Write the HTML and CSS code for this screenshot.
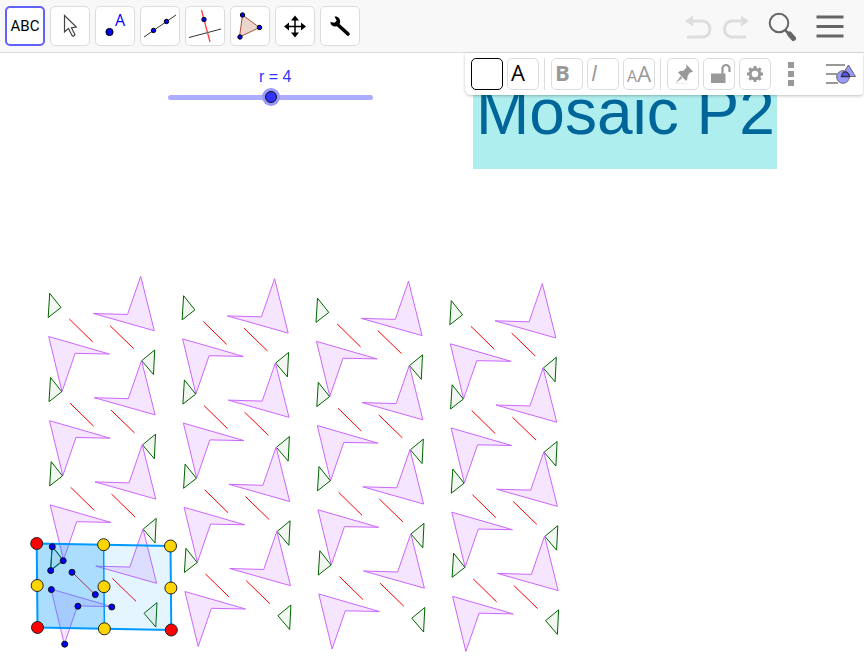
FILE: index.html
```html
<!DOCTYPE html>
<html lang="en">
<head>
<meta charset="utf-8">
<title>Mosaic P2</title>
<link rel="stylesheet" href="styles.css">
</head>
<body>
<div class="app">
  <header class="header">
    <nav class="tools" aria-label="Tools">
      <button class="tool tool-active" type="button">ABC</button>
      <button class="tool" type="button" aria-label="Move">
        <svg viewBox="0 0 38 38"><path d="M13.500 8.500V25l4-3.500 3.500 7q1.500 1.500 3-.8l-3.500-7 4.800-.6z" fill="#fff" stroke="#444" stroke-width="1.200"/></svg>
      </button>
      <button class="tool tool-point" type="button" aria-label="Point">
        <svg viewBox="0 0 38 38"><circle cx="13.500" cy="25" r="3.600" fill="#00f" stroke="#000"/><text x="19" y="19">A</text></svg>
      </button>
      <button class="tool" type="button" aria-label="Line">
        <svg viewBox="0 0 38 38"><path d="M3 30 35 8" stroke="#333"/><g fill="#00f" stroke="#000"><circle cx="12.500" cy="23.500" r="2.200"/><circle cx="25.500" cy="14.500" r="2.200"/></g></svg>
      </button>
      <button class="tool" type="button" aria-label="Perpendicular line">
        <svg viewBox="0 0 38 38"><path d="M3 30.500 35 22" stroke="#333"/><path d="m15.500 3 8.500 32" stroke="#f33" stroke-width="1.200"/><circle cx="18" cy="12.500" r="2.200" fill="#00f" stroke="#000"/></svg>
      </button>
      <button class="tool" type="button" aria-label="Polygon">
        <svg viewBox="0 0 38 38"><path d="m11.500 8 17 12.500L8.500 30z" fill="#ebd5cc" stroke="#a65340"/><g fill="#00f" stroke="#000"><circle cx="11.500" cy="8" r="2.200"/><circle cx="28.500" cy="20.500" r="2.200"/><circle cx="9" cy="30" r="2.200"/></g></svg>
      </button>
      <button class="tool" type="button" aria-label="Move graphics view">
        <svg viewBox="0 0 38 38"><path d="M19 12v15M11 19.500h16" stroke="#000" stroke-width="1.500"/><path d="m19 8.500 4 5h-8zm0 22 4-5h-8zM8 19.500l5-4v8zm22 0-5-4v8z"/></svg>
      </button>
      <button class="tool" type="button" aria-label="Custom tools">
        <svg viewBox="0 0 38 38"><path d="m16 17 11 10" stroke="#000" stroke-width="3.600" stroke-linecap="round"/><path d="M13.500 9.500c3-.7 6.500 2 5.500 6.500-.8 3.600-5.500 4.500-8 2.500-1-.8-1.600-2-1.500-3.500l4 .8 2.200-2z"/></svg>
      </button>
    </nav>
    <div class="actions">
      <button class="action" type="button" aria-label="Undo" disabled>
        <svg viewBox="0 0 32 32"><path d="M9 11h11.500a7.500 8 0 0 1 0 16H5" fill="none" stroke="#ddd" stroke-width="3"/><path d="m3 11 8-5.500v11z" fill="#ddd"/></svg>
      </button>
      <button class="action" type="button" aria-label="Redo" disabled>
        <svg viewBox="0 0 32 32"><path d="M25.500 11H14a7.500 8 0 0 0 0 16H28" fill="none" stroke="#ddd" stroke-width="3"/><path d="m31 11-8-5.500v11z" fill="#ddd"/></svg>
      </button>
      <button class="action action-search" type="button" aria-label="Search">
        <svg viewBox="0 0 32 32"><circle cx="13" cy="13" r="9.300" fill="none" stroke="#666" stroke-width="2"/><path d="m19 20 3 3" stroke="#666" stroke-width="2.500"/><path d="m23.500 24 4 4.500" stroke="#666" stroke-width="5" stroke-linecap="round"/></svg>
      </button>
      <button class="action action-menu" type="button" aria-label="Menu">
        <svg viewBox="0 0 32 32"><path d="M2.500 7h27M2.500 16.500h27M2.500 26h27" stroke="#666" stroke-width="3"/></svg>
      </button>
    </div>
  </header>

  <main class="canvas">
    <svg class="drawing" width="864" height="611" viewBox="0 53 864 611" role="img" aria-label="Mosaic pattern">
      <defs>
        <g id="motif">
          <path class="green" d="M49.700 293.300 61 307.500 48.200 317.500z"/>
          <path class="green" d="M154.700 350 141.700 360.700 153.500 374.500z"/>
          <path class="purple" d="M140.700 276.300 154.300 330.700 93.500 313.500 127.500 314.500z"/>
          <path class="purple" d="M48.700 336.500 109.300 354 75.200 353.300 62 391.500z"/>
          <path class="red" d="m69.300 319 23.500 23M110 325.700l23.700 23"/>
        </g>
        <g id="column">
          <use href="#motif"/>
          <use href="#motif" x="0.800" y="84.200"/>
          <use href="#motif" x="1.500" y="168.400"/>
          <use href="#motif" x="2.300" y="252.600"/>
        </g>
      </defs>
      <use href="#column"/>
      <use href="#column" x="133.900" y="2.400"/>
      <use href="#column" x="267.800" y="4.900"/>
      <use href="#column" x="401.600" y="7.300"/>
      <path d="M36.700 543.500 170.500 546 171.300 630 37.500 627.500z" fill="#09f" fill-opacity=".1"/>
      <path d="M36.700 543.500 103.600 544.700 104.400 628.800 37.500 627.500z" fill="#09f" fill-opacity=".25"/>
      <path d="M36.700 543.500 170.500 546 171.300 630 37.500 627.500z" fill="none" stroke="#09f" stroke-width="2"/>
      <path d="m103.600 544.700.8 84" stroke="#09f" stroke-width="1.500"/>
      <path d="M52.300 546.700 63.300 560.700 50.700 570.600z" fill="none" stroke="#006080"/>
      <g fill="#f00" stroke="#222" stroke-width="1">
        <circle cx="36.700" cy="543.500" r="6"/><circle cx="37.500" cy="627.500" r="6"/><circle cx="171.300" cy="630" r="6"/>
      </g>
      <g fill="#ffd500" stroke="#222" stroke-width="1">
        <circle cx="103.600" cy="544.700" r="6"/><circle cx="170.500" cy="546" r="6"/><circle cx="37.200" cy="585.500" r="6"/><circle cx="104" cy="586.700" r="6"/><circle cx="170.900" cy="588" r="6"/><circle cx="104.400" cy="628.800" r="6"/>
      </g>
      <g fill="#00f" stroke="#111" stroke-width="1">
        <circle cx="52.300" cy="546.700" r="3"/><circle cx="63.200" cy="560.700" r="3"/><circle cx="50.700" cy="570.600" r="3"/><circle cx="72" cy="572.300" r="3"/><circle cx="95.300" cy="594.600" r="3"/><circle cx="51.400" cy="589.600" r="3"/><circle cx="77.900" cy="606.200" r="3"/><circle cx="111.800" cy="607" r="3"/><circle cx="64.700" cy="644.200" r="3"/>
      </g>
    </svg>
    <div class="slider">
      <label for="r">r = 4</label>
      <input id="r" type="range" min="0" max="8" value="4">
    </div>
    <h1 class="title">Mosaic P2</h1>
    <div class="stylebar" role="toolbar" aria-label="Style">
      <button class="style style-color" type="button" aria-label="Background colour"></button>
      <button class="style style-text" type="button">A</button>
      <span class="divider"></span>
      <button class="style style-text style-bold" type="button">B</button>
      <button class="style style-text style-italic" type="button">I</button>
      <button class="style style-size" type="button"><small>A</small>A</button>
      <span class="divider"></span>
      <button class="style" type="button" aria-label="Pin">
        <svg viewBox="0 0 30 30"><path d="m18 5 7 7.500-2 1-1.500.2-2 3.800q.5 3-1.500 4.500l-8-8.500q2-2.500 5-1.500l3.500-3.500z" fill="#999"/><path d="m12.500 17-5 7.500 7-5.500z" fill="#aaa"/><path d="M9 24.500h10" stroke="#eee"/></svg>
      </button>
      <button class="style" type="button" aria-label="Lock">
        <svg viewBox="0 0 30 30"><path d="M7 14.500h14.500V24H7z" fill="#999"/><path d="M18.500 15V9.500a3.500 3.500 0 0 1 7 0V13" fill="none" stroke="#999" stroke-width="2.200"/></svg>
      </button>
      <button class="style" type="button" aria-label="Settings">
        <svg viewBox="0 0 30 30"><circle cx="15" cy="15" r="4.800" fill="none" stroke="#999" stroke-width="3"/><path d="M15 7v3m0 10v3M7 15h3m10 0h3M9.300 9.300l2.200 2.200m7 7 2.200 2.200m0-11.400-2.200 2.200m-7 7-2.200 2.200" stroke="#999" stroke-width="3"/></svg>
      </button>
      <button class="style style-plain" type="button" aria-label="More">
        <svg viewBox="0 0 32 32"><path d="M13 4h6v6h-6zm0 9h6v6h-6zm0 9h6v6h-6z" fill="#999"/></svg>
      </button>
      <button class="style style-plain style-view" type="button" aria-label="Graphics view">
        <svg viewBox="0 0 32 32"><path d="M1 7h19M1 16h11M1 25h12" stroke="#999" stroke-width="2"/><circle cx="18" cy="19" r="6.300" fill="#99f" stroke="#666"/><path d="m23.500 7 7 11.500H16z" fill="#99f" stroke="#666"/><path d="M16.500 18.500q1-5.500 5-4.500 2.500 1.500 3 4.500z" fill="#55f" stroke="#333" stroke-width="1.300"/></svg>
      </button>
    </div>
  </main>
</div>
</body>
</html>
```
FILE: styles.css
```css
* {
  box-sizing: border-box;
}

body {
  margin: 0;
  background: #fff;
  font-family: "Liberation Sans", Arial, sans-serif;
}

button {
  margin: 0;
  padding: 0;
  font-family: "Open Sans", sans-serif;
}

.app {
  display: flex;
  flex-direction: column;
  min-height: 100vh;
  overflow: hidden;
}

.header {
  display: flex;
  align-items: center;
  justify-content: space-between;
  padding: 6px 18px 6px 5px;
  border-bottom: 1px solid #dcdcdc;
  background: #f8f8f8;
}

.tools {
  display: flex;
  gap: 5px;
}

.tool {
  width: 40px;
  height: 40px;
  border: 1px solid #dcdcdc;
  border-radius: 5px;
  background: #fff;
  color: #000;
  font-size: 15px;
}

.tool-active {
  border: 2px solid #6161ff;
  font-family: Roboto, sans-serif;
}

.tool svg,
.action svg,
.style svg {
  display: block;
  width: 100%;
  height: 100%;
}

.tool-point text {
  fill: #00f;
  font-size: 16px;
}

.actions {
  display: flex;
  align-items: center;
  gap: 4px;
}

.action {
  width: 32px;
  height: 32px;
  padding: 0;
  border: 0;
  background: none;
}

.action-search,
.action-menu {
  margin-left: 12px;
}

.canvas {
  position: relative;
  flex: 1;
}

.drawing {
  display: block;
}

.green {
  fill: #006400;
  fill-opacity: 0.05;
  stroke: #006400;
}

.purple {
  fill: #a0f;
  fill-opacity: 0.1;
  stroke: #c6f;
}

.red {
  stroke: #f00;
}

.slider {
  position: absolute;
  top: 14px;
  left: 168px;
  display: flex;
  flex-direction: column;
  width: 205px;
  color: #33f;
  font-size: 16px;
  line-height: 20px;
}

.slider label {
  padding-left: 91px;
}

.slider input {
  width: 100%;
  height: 20px;
  margin: 0;
  background: none;
  appearance: none;
}

.slider input::-webkit-slider-runnable-track {
  height: 5px;
  border-radius: 3px;
  background: #adadff;
}

.slider input::-webkit-slider-thumb {
  width: 12px;
  height: 12px;
  margin-top: -4px;
  border: 1px solid #111;
  border-radius: 50%;
  background: #33f;
  box-shadow: 0 0 0 3px #9999fa;
  appearance: none;
}

.title {
  position: absolute;
  top: 20px;
  left: 473px;
  margin: 0;
  padding: 3px 2px 21px 3px;
  background: #afeeee;
  color: #069;
  font-size: 64px;
  font-weight: 400;
  line-height: 72px;
  white-space: nowrap;
}

.stylebar {
  position: absolute;
  top: 0;
  right: 1px;
  display: flex;
  gap: 4px;
  width: 398px;
  padding: 5px 6px;
  border-radius: 0 0 3px 6px;
  background: #fff;
  box-shadow: 0 1px 3px rgba(0, 0, 0, 0.25);
}

.style {
  width: 32px;
  height: 32px;
  border: 1px solid #dcdcdc;
  border-radius: 5px;
  background: #fff;
  color: #999;
  font-size: 22px;
  line-height: 26px;
  text-align: left;
}

.style-color {
  border-color: #000;
}

.style-text {
  padding: 0 0 4px 3px;
  color: #000;
}

.style-bold {
  color: #999;
  font-weight: 700;
}

.style-italic {
  color: #999;
  font-style: italic;
}

.style-size {
  padding-left: 3px;
}

.style-size small {
  font-size: 16px;
}

.style-plain {
  border: 0;
}

.style-view {
  margin-left: auto;
}

.divider {
  width: 4px;
  background: linear-gradient(#dcdcdc, #dcdcdc) 1px 0 / 1px 100% no-repeat;
}
```
